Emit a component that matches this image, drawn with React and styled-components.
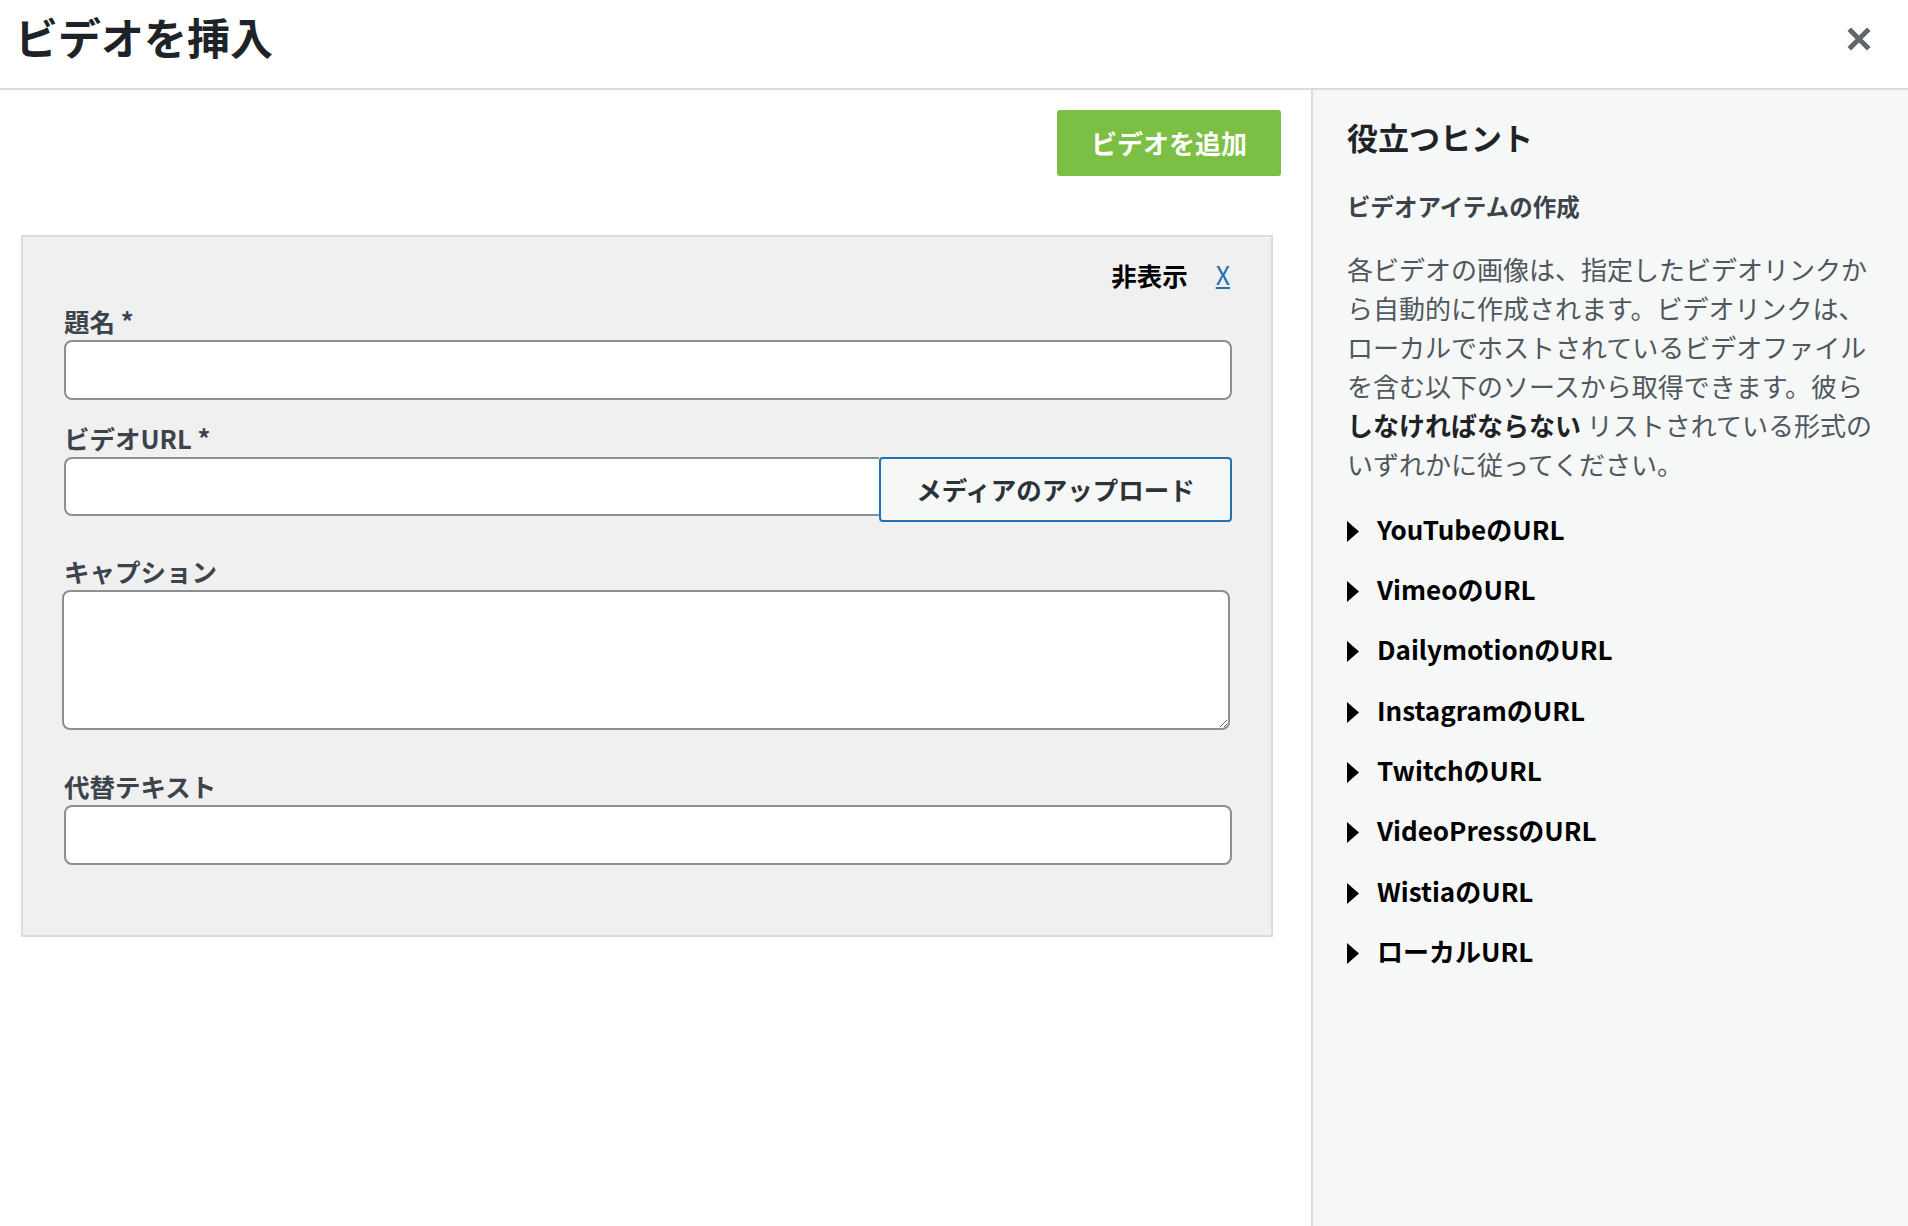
import React from 'react';
import styled, { createGlobalStyle } from 'styled-components';

const GlobalStyle = createGlobalStyle`
  html, body {
    margin: 0;
    padding: 0;
    background: #ffffff;
  }
  body {
    font-family: "Noto Sans CJK JP", "Noto Sans", sans-serif;
    color: #1d2327;
  }
  * {
    box-sizing: border-box;
  }
`;

const Page = styled.div`
  display: flex;
  flex-direction: column;
  height: 100vh;
  overflow: hidden;
`;

const Header = styled.header`
  display: flex;
  align-items: center;
  justify-content: space-between;
  height: 90px;
  padding: 0 36px 14px 15px;
  border-bottom: 2px solid #dcdcde;
  flex-shrink: 0;
`;

const Title = styled.h1`
  margin: 0;
  font-size: 43px;
  font-weight: 700;
  line-height: 1.2;
  color: #1d2327;
`;

const CloseButton = styled.button`
  display: flex;
  align-items: center;
  justify-content: center;
  width: 26px;
  height: 26px;
  margin-top: 4px;
  padding: 0;
  border: 0;
  background: transparent;
  cursor: pointer;
`;

const Body = styled.div`
  display: flex;
  flex: 1;
  min-height: 0;
`;

const Main = styled.main`
  flex: 1;
  padding-top: 20px;
`;

const Toolbar = styled.div`
  display: flex;
  justify-content: flex-end;
  padding-right: 30px;
`;

const AddButton = styled.button`
  width: 224px;
  height: 66px;
  padding-bottom: 3px;
  border: 0;
  border-radius: 3px;
  background: #7cbf45;
  color: #ffffff;
  font-family: inherit;
  font-size: 26px;
  font-weight: 700;
  cursor: pointer;
`;

const FormBox = styled.section`
  margin: 59px 38px 0 21px;
  padding: 22px 39px 70px 41px;
  background: #f0f0f1;
  border: 2px solid #dcdcde;
`;

const HideRow = styled.div`
  display: flex;
  justify-content: flex-end;
  align-items: center;
  gap: 28px;
  height: 30px;
  padding-right: 2px;
`;

const HideLabel = styled.span`
  font-size: 25.5px;
  font-weight: 700;
  color: #000000;
`;

const HideLink = styled.a`
  font-size: 25px;
  color: #2271b1;
  text-decoration: underline;
  cursor: pointer;
`;

const Field = styled.div`
  margin-top: ${p => p.$top}px;
`;

const Label = styled.label`
  display: block;
  height: 30px;
  margin-bottom: 4px;
  font-size: 25.5px;
  font-weight: 700;
  line-height: 30px;
  color: #3c434a;
`;

const TextInput = styled.input`
  display: block;
  width: 100%;
  height: 60px;
  padding: 0 14px;
  border: 2px solid #8c8f94;
  border-radius: 8px;
  background: #ffffff;
  font-family: inherit;
  font-size: 24px;
`;

const UrlRow = styled.div`
  display: flex;
  align-items: flex-start;
`;

const UrlInput = styled(TextInput)`
  flex: 1;
  width: auto;
  height: 59px;
  border-right: 0;
  border-radius: 8px 0 0 8px;
`;

const UploadButton = styled.button`
  width: 353px;
  height: 65px;
  flex-shrink: 0;
  padding-bottom: 3px;
  border: 2px solid #2271b1;
  border-radius: 4px;
  background: #f6f7f7;
  color: #2c3338;
  font-family: inherit;
  font-size: 25.5px;
  font-weight: 700;
  cursor: pointer;
`;

const Caption = styled.textarea`
  display: block;
  width: 100%;
  height: 140px;
  margin-left: -2px;
  padding: 10px 14px;
  border: 2px solid #8c8f94;
  border-radius: 8px;
  background: #ffffff;
  font-family: inherit;
  font-size: 24px;
`;

const Sidebar = styled.aside`
  width: 597px;
  flex-shrink: 0;
  padding: 26px 28px 0 34px;
  background: #f6f7f7;
  border-left: 2px solid #dcdcde;
`;

const SideTitle = styled.h2`
  margin: 0;
  font-size: 31px;
  font-weight: 700;
  line-height: 42px;
  color: #1d2327;
`;

const SideSubtitle = styled.h3`
  margin: 32px 0 0;
  font-size: 23.5px;
  font-weight: 700;
  line-height: 32px;
  color: #3c434a;
`;

const SideText = styled.p`
  width: 534px;
  margin: 27px 0 0;
  font-size: 26px;
  line-height: 39px;
  color: #50575e;

  strong {
    color: #1d2327;
    font-weight: 700;
  }
`;

const HintList = styled.div`
  display: flex;
  flex-direction: column;
  gap: 24.4px;
  margin-top: 27px;
`;

const HintItem = styled.div`
  display: flex;
  align-items: center;
  gap: 18px;
  height: 36px;
  font-size: 26px;
  font-weight: 700;
  color: #000000;
  cursor: pointer;

  svg {
    margin-top: 6px;
  }
`;

const CloseIcon = () => (
  <svg width="24" height="24" viewBox="0 0 24 24">
    <path d="M4 4 L20 20 M20 4 L4 20" stroke="#62676d" strokeWidth="5" strokeLinecap="square" fill="none" />
  </svg>
);

const Marker = () => (
  <svg width="12" height="21" viewBox="0 0 12 21">
    <polygon points="0,0 12,10.5 0,21" fill="#000000" />
  </svg>
);

const hints = [
  'YouTubeのURL',
  'VimeoのURL',
  'DailymotionのURL',
  'InstagramのURL',
  'TwitchのURL',
  'VideoPressのURL',
  'WistiaのURL',
  'ローカルURL',
];

export default function App() {
  return (
    <>
      <GlobalStyle />
      <Page>
        <Header>
          <Title>ビデオを挿入</Title>
          <CloseButton aria-label="閉じる">
            <CloseIcon />
          </CloseButton>
        </Header>
        <Body>
          <Main>
            <Toolbar>
              <AddButton>ビデオを追加</AddButton>
            </Toolbar>
            <FormBox>
              <HideRow>
                <HideLabel>非表示</HideLabel>
                <HideLink>X</HideLink>
              </HideRow>
              <Field $top={17}>
                <Label>題名 *</Label>
                <TextInput type="text" />
              </Field>
              <Field $top={23}>
                <Label>ビデオURL *</Label>
                <UrlRow>
                  <UrlInput type="text" />
                  <UploadButton>メディアのアップロード</UploadButton>
                </UrlRow>
              </Field>
              <Field $top={34}>
                <Label>キャプション</Label>
                <Caption />
              </Field>
              <Field $top={41}>
                <Label>代替テキスト</Label>
                <TextInput type="text" />
              </Field>
            </FormBox>
          </Main>
          <Sidebar>
            <SideTitle>役立つヒント</SideTitle>
            <SideSubtitle>ビデオアイテムの作成</SideSubtitle>
            <SideText>
              各ビデオの画像は、指定したビデオリンクから自動的に作成されます。ビデオリンクは、ローカルでホストされているビデオファイルを含む以下のソースから取得できます。彼ら<strong>しなければならない</strong> リストされている形式のいずれかに従ってください。
            </SideText>
            <HintList>
              {hints.map(h => (
                <HintItem key={h}>
                  <Marker />
                  <span>{h}</span>
                </HintItem>
              ))}
            </HintList>
          </Sidebar>
        </Body>
      </Page>
    </>
  );
}
